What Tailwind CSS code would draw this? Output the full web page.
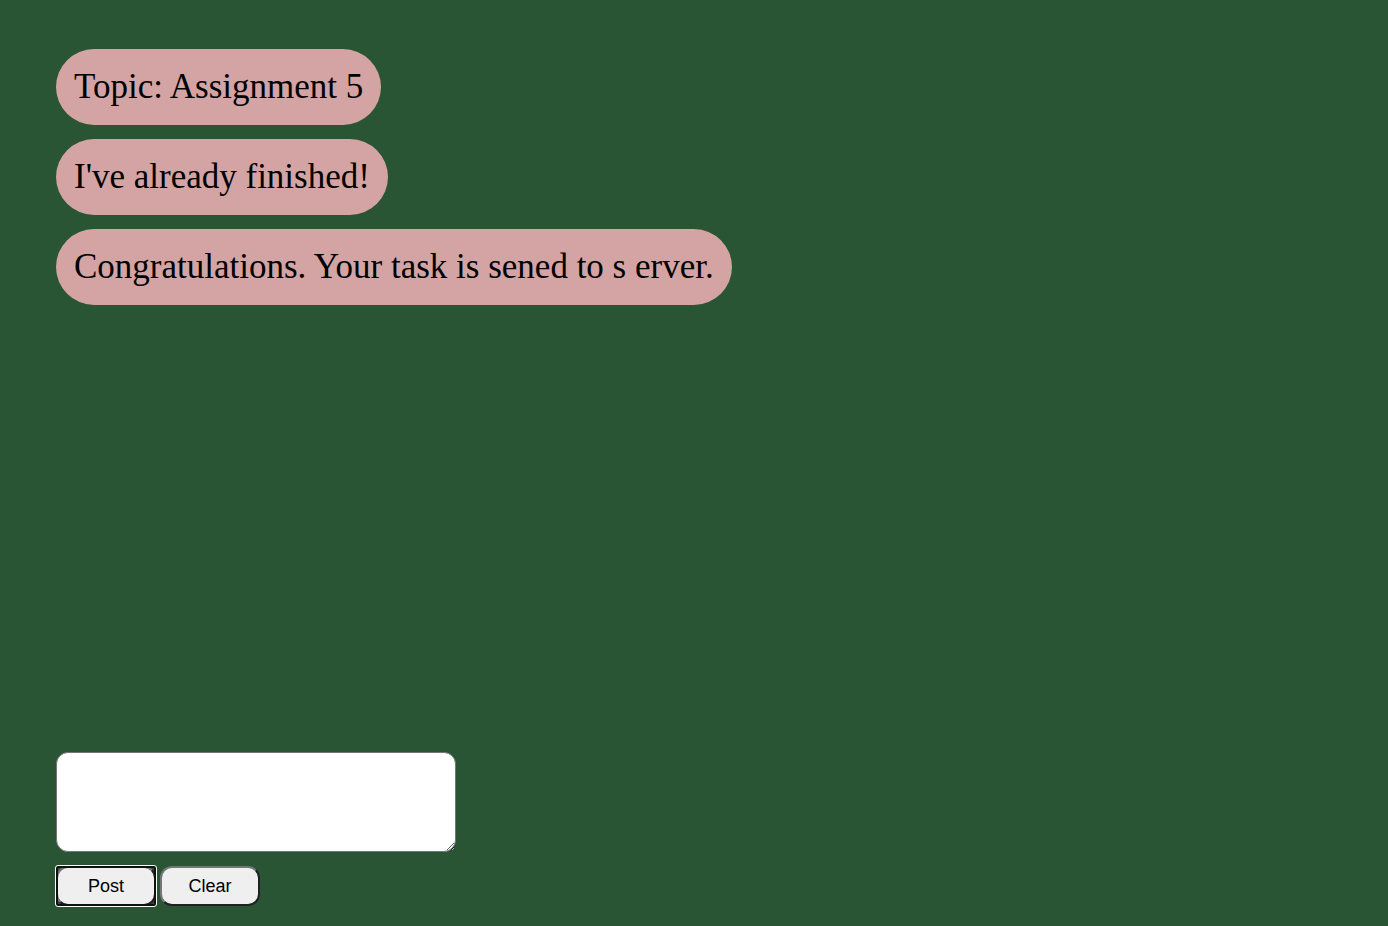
<!DOCTYPE html>
<html lang="en">
<head>
<meta charset="utf-8">
<meta name="viewport" content="width=device-width, initial-scale=1">
<title>Assignment 5</title>
<script src="https://cdn.jsdelivr.net/npm/@tailwindcss/browser@4"></script>
</head>
<body class="flex min-h-screen flex-col justify-between bg-[#295534] px-14 pt-[49px] pb-5 font-['Liberation_Serif',serif] text-black">
  <main class="flex flex-col items-start gap-3.5">
    <p class="rounded-full bg-[#d3a4a3] p-[18px] text-[35px] leading-10">Topic: Assignment 5</p>
    <p class="rounded-full bg-[#d3a4a3] p-[18px] text-[35px] leading-10">I've already finished!</p>
    <p class="rounded-full bg-[#d3a4a3] p-[18px] text-[35px] leading-10">Congratulations. Your task is sened to s erver.</p>
  </main>
  <form class="flex flex-col gap-3.5">
    <textarea aria-label="Message" class="h-[100px] w-[400px] max-w-full resize rounded-xl border border-[#767676] bg-white p-2 font-['Liberation_Sans',sans-serif] text-lg outline-none"></textarea>
    <div class="flex gap-1 font-['Liberation_Sans',sans-serif] text-lg">
      <button type="button" class="relative h-10 w-[100px] rounded-xl border-2 border-t-[#767676] border-r-[#212121] border-b-[#212121] border-l-[#767676] bg-[#efefef] leading-5 outline-none after:absolute after:-inset-0.5 after:rounded-xs after:border-2 after:border-[#101010] after:outline after:outline-white">Post</button>
      <button type="button" class="h-10 w-[100px] rounded-xl border-2 border-t-[#767676] border-r-[#212121] border-b-[#212121] border-l-[#767676] bg-[#efefef] leading-5">Clear</button>
    </div>
  </form>
</body>
</html>
